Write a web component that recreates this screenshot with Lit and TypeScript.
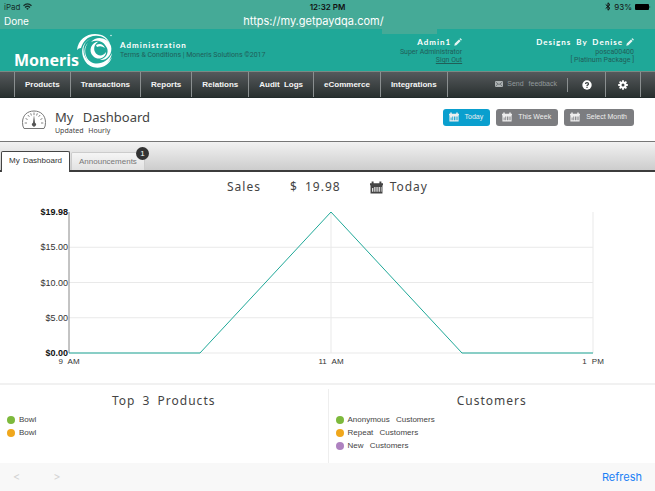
import { LitElement, html, css, svg } from "lit";
import { customElement, property } from "lit/decorators.js";

const calendar = html`<svg class="cal" viewBox="0 0 12 12" aria-hidden="true">
  <path fill="currentColor" fill-rule="evenodd" d="M0 2h1.500V.5h1.800V2h5.400V.5h1.800V2H12v2H0zM.5 4h11v7.500H.5zM2 6.500V10h1V6.500zm2-1V10h1V5.500zm2 0V10h1V5.500zm2 0V10h1V5.500zm2 0V10h.6V5.500z"/>
</svg>`;

const pencil = html`<svg class="pencil" viewBox="0 0 8 8" aria-hidden="true">
  <path fill="currentColor" d="M.3 7.700.8 5.600 5 1.400 6.600 3 2.400 7.200zM5.500.9 6 .4Q6.400 0 6.800.4L7.600 1.200Q8 1.600 7.600 2L7.100 2.500z"/>
</svg>`;

@customElement("sales-chart")
export class SalesChart extends LitElement {
  @property({ attribute: false }) values = [0, 0, 19.98, 0, 0];
  @property({ attribute: false }) hours = ["9 AM", "11 AM", "1 PM"];
  @property({ attribute: false }) ticks = ["$19.98", "$15.00", "$10.00", "$5.00", "$0.00"];

  static styles = css`
    :host {
      display: grid;
      grid-template-columns: 68px 1fr;
      column-gap: 1px;
      padding-right: 62px;
      font: 8px/8px "Liberation Sans", Arial, sans-serif;
      color: #333;
    }
    .y {
      display: flex;
      flex-direction: column;
      justify-content: space-between;
      margin: -4px 0;
      text-align: right;
      font-size: 9px;
    }
    .y span:first-child,
    .y span:last-child {
      font-weight: bold;
      color: #111;
    }
    .plot {
      display: block;
      width: 100%;
      height: 141px;
      overflow: visible;
    }
    .plot * {
      vector-effect: non-scaling-stroke;
      fill: none;
    }
    .grid { stroke: #e9e9e9; }
    .axis { stroke: #888; }
    .line { stroke: #1fa898; }
    .x {
      grid-column: 2;
      display: flex;
      justify-content: space-between;
      padding-top: 5px;
      word-spacing: 3px;
    }
    .x span {
      display: flex;
      justify-content: center;
      width: 0;
      white-space: nowrap;
    }
  `;

  render() {
    const max = Math.max(...this.values);
    const last = this.values.length - 1;
    const points = this.values
      .map((v, i) => `${(i / last) * 100},${100 - (v / max) * 100}`)
      .join(" ");
    return html`
      <div class="y">${this.ticks.map((t) => html`<span>${t}</span>`)}</div>
      <svg class="plot" viewBox="0 0 100 100" preserveAspectRatio="none" role="img" aria-label="Sales by hour">
        ${[25, 50, 75, 100].map((y) => svg`<path class="grid" d="M0 ${y}H100"/>`)}
        ${[50, 100].map((x) => svg`<path class="grid" d="M${x} 0V100"/>`)}
        <path class="axis" d="M0 0V100" />
        <polyline class="line" points=${points} />
      </svg>
      <div class="x">${this.hours.map((h) => html`<span>${h}</span>`)}</div>
    `;
  }
}

@customElement("app-root")
export class AppRoot extends LitElement {
  static styles = css`
    :host {
      display: flex;
      flex-direction: column;
      min-height: 100vh;
      box-sizing: border-box;
      background: #fff;
      color: #444;
      font: 8px/10px "Liberation Sans", Arial, sans-serif;
    }
    * { box-sizing: border-box; }
    button {
      font: inherit;
      color: inherit;
      background: none;
      border: 0;
      padding: 0;
    }
    a { color: inherit; text-decoration: none; }
    h1, h2, p, ul { margin: 0; padding: 0; list-style: none; }
    svg { display: block; flex: none; }

    .browser {
      background: #45aa97;
      font-family: Inter, sans-serif;
      padding: 0 4px;
    }
    .row {
      display: grid;
      grid-template-columns: 1fr auto 1fr;
      align-items: center;
    }
    .status { height: 13px; color: #16302b; }
    .status .left, .status .right { display: flex; align-items: center; gap: 3px; }
    .status .right { justify-content: flex-end; color: #111; }
    .status .time { font-weight: 600; color: #111; }
    .wifi { width: 9px; height: 7px; }
    .bt { width: 6px; height: 9px; }
    .battery { width: 16px; height: 6px; }
    .address { height: 16px; color: #fff; font-size: 11px; line-height: 16px; }
    .address button { justify-self: start; font-size: 10px; }
    .address .url { padding-right: 28px; }

    .brand {
      display: flex;
      align-items: flex-start;
      height: 42px;
      padding: 4px 21px 0 14px;
      background: #1fa898;
      color: #205e58;
      position: relative;
    }
    .brand::before {
      content: "";
      position: absolute;
      top: 0;
      right: 218px;
      width: 55px;
      height: 5px;
      background: #45aa97;
    }
    .logo { display: flex; color: #fff; }
    .logo b {
      font: bold 16px/20px "Noto Sans", sans-serif;
      margin-top: 17px;
    }
    .swirl { width: 36px; height: 36px; margin-left: -2px; }
    .title {
      flex: 1;
      margin: 7px 0 0 7px;
      font: 7px/10px Roboto, sans-serif;
      white-space: nowrap;
    }
    .title h2, .who strong {
      font: bold 8px/10px Lato, sans-serif;
      letter-spacing: 1px;
      word-spacing: 2px;
      color: #fff;
    }
    .who {
      display: flex;
      flex-direction: column;
      align-items: flex-end;
      margin-top: 4px;
      font: 7px/8px Roboto, sans-serif;
      white-space: nowrap;
    }
    .who + .who { margin-left: 74px; }
    .who .name { display: flex; gap: 3px; align-items: center; padding-bottom: 1px; }
    .who a { text-decoration: underline; }
    .pencil { width: 8px; height: 8px; color: #e4f5f2; }

    nav {
      display: flex;
      height: 27px;
      padding: 0 14px;
      border-top: 1px solid #7b8a84;
      border-bottom: 1px solid #222b2b;
      background: linear-gradient(#55595c, #29302f);
      color: #f5f5f5;
      font-weight: bold;
      line-height: 25px;
    }
    nav .item {
      padding: 0 10px;
      border-left: 1px solid #8a8f90;
      white-space: nowrap;
      word-spacing: 2px;
    }
    nav .item:nth-child(7) { border-right: 1px solid #8a8f90; }
    nav .feedback {
      display: flex;
      align-items: center;
      gap: 4px;
      margin-left: auto;
      padding-right: 10px;
      color: #92999b;
      font-size: 7px;
      font-weight: normal;
      line-height: 23px;
      height: 23px;
      word-spacing: 3px;
      white-space: nowrap;
    }
    .mail { width: 8px; height: 6px; }
    .rule { width: 1px; height: 14px; margin-top: 6px; background: #8a8f90; }
    nav .tool {
      display: grid;
      place-items: center;
      width: 35px;
      border-right: 1px solid #8a8f90;
    }
    nav .tool.help { width: 38px; }
    nav .tool svg { width: 10px; height: 10px; }

    .heading {
      display: flex;
      align-items: center;
      height: 43px;
      padding: 0 21px;
    }
    .gauge { width: 26px; height: 20px; }
    .names { flex: 1; margin-left: 8px; padding-top: 5px; }
    h1, .names p { font: 13px/17px "Noto Sans", sans-serif; word-spacing: 6px; }
    .names p { font-size: 7px; line-height: 10px; word-spacing: 3px; }
    .ranges { display: flex; gap: 6px; margin-bottom: 5px; }
    .ranges button {
      display: flex;
      align-items: center;
      gap: 6px;
      height: 17px;
      padding: 0 7px 0 6px;
      border-radius: 3px;
      background: #7c7d80;
      color: #eee;
      font-size: 7px;
    }
    .ranges button.on { background: #0a9fce; }
    .cal { width: 10px; height: 10px; }

    .tabs {
      display: flex;
      align-items: flex-end;
      gap: 1px;
      height: 31px;
      padding-left: 1px;
      border-top: 1px solid #777;
      background: linear-gradient(#f2f2f2, #cacaca);
      box-shadow: inset 0 -2px #3c3c3c;
    }
    .tabs button {
      height: 18px;
      margin-bottom: 2px;
      padding: 0 7px;
      border: 1px solid #ccc;
      border-bottom: 0;
      border-radius: 2px 2px 0 0;
      background: linear-gradient(#f5f5f5, #e2e2e2);
      color: #777;
      position: relative;
    }
    .tabs button.on {
      height: 21px;
      margin-bottom: 0;
      padding-bottom: 2px;
      border-color: #444;
      background: #fff;
      color: #333;
      word-spacing: 1px;
    }
    .badge {
      position: absolute;
      right: -5px;
      top: -6px;
      width: 13px;
      height: 13px;
      border-radius: 50%;
      background: #333;
      color: #fff;
      line-height: 13px;
    }

    .sales, .panel h2 {
      font: 12px/18px "Noto Sans", sans-serif;
      letter-spacing: 1px;
      word-spacing: 3px;
      color: #444;
    }
    .sales {
      display: flex;
      justify-content: center;
      align-items: center;
      gap: 29px;
      padding: 6px 0;
    }
    .sales span { display: flex; align-items: center; gap: 7px; }
    .sales .cal { width: 13px; height: 13px; }
    sales-chart { margin-top: 10px; }

    .panels {
      display: grid;
      grid-template-columns: 1fr 1fr;
      flex: 1;
      margin-top: 17px;
      padding-top: 4px;
      border-top: 2px solid #f1f1f1;
    }
    .panel { padding: 3px 7px 0; }
    .panel + .panel { border-left: 1px solid #eee; }
    .panel h2 { text-align: center; margin-bottom: 3px; }
    .panel li { display: flex; align-items: center; gap: 4px; height: 13px; word-spacing: 4px; }
    .dot { width: 8px; height: 8px; border-radius: 50%; }
    .green { background: #7db93c; }
    .orange { background: #f0a71c; }
    .purple { background: #ae82c0; }

    footer {
      display: flex;
      align-items: center;
      gap: 33px;
      height: 28px;
      padding: 0 13px;
      background: #f8f8f8;
      color: #d3d3d3;
      font: 11px/14px Inter, sans-serif;
    }
    footer .refresh { margin-left: auto; color: #1a80f5; }
  `;

  private menu = ["Products", "Transactions", "Reports", "Relations", "Audit Logs", "eCommerce", "Integrations"];

  private panel(title: string, rows: [string, string][]) {
    return html`<section class="panel">
      <h2>${title}</h2>
      <ul>${rows.map(([c, t]) => html`<li><i class="dot ${c}"></i>${t}</li>`)}</ul>
    </section>`;
  }

  render() {
    return html`
      <div class="browser">
        <div class="row status">
          <span class="left">iPad
            <svg class="wifi" viewBox="0 0 9 7" aria-hidden="true"><g fill="none" stroke="currentColor" stroke-width="1.300"><path d="M.5 2.700Q4.500-1 8.500 2.700M2 4.400Q4.500 2.200 7 4.400"/></g><path fill="currentColor" d="M3.200 5.400Q4.500 4.400 5.800 5.400L4.500 7z"/></svg>
          </span>
          <span class="time">12:32 PM</span>
          <span class="right">
            <svg class="bt" viewBox="0 0 6 9" aria-hidden="true"><path fill="none" stroke="currentColor" d="M.7 2.500 5 6.300 3 8.200V.8L5 2.700.7 6.500"/></svg>
            93%
            <svg class="battery" viewBox="0 0 16 6" aria-hidden="true"><rect width="14" height="6" rx="1"/><path d="M14.600 2Q16 3 14.600 4z"/></svg>
          </span>
        </div>
        <div class="row address">
          <button>Done</button>
          <span class="url">https://my.getpaydqa.com/</span>
        </div>
      </div>

      <header class="brand">
        <div class="logo">
          <b>Moneris</b>
          <svg class="swirl" viewBox="0 0 36 36" fill="#fff" aria-hidden="true">
            <path d="M0 17C1 7 9 1 18 1C26 1 31 5 33 11C30 6 25 2.500 19 2.800C10 3 6 9 4 15Q1.500 15 0 17z"/>
            <path d="M15 5.500C5 8 4 21 11 28C18 35 30 33 35 24C31 37 14 38 8 28C2 18 6 8 15 5.500z"/>
            <path d="M11 10C6 16 8 25 14 29C21 33 31 29 35 20C33 35 16 37 10 27C6 20 7 13 11 10z"/>
            <path d="M14 9C20 2 31 5 34 13C36 21 30 28 23 27C29 25 32 20 30 15C27 8 20 6 14 9z"/>
            <path d="M22 8.500C14 9 11 18 16 23C21 28 29 25 29 19C26 24 20 23 18 19C16 15 18 10 22 8.500z"/>
            <path d="M19 12Q25 9 28 15Q24 12 20 14z"/>
            <circle cx="34" cy="2.500" r=".7"/>
          </svg>
        </div>
        <div class="title">
          <h2>Administration</h2>
          <span>Terms &amp; Conditions | Moneris Solutions ©2017</span>
        </div>
        <div class="who">
          <span class="name"><strong>Admin1</strong>${pencil}</span>
          <span>Super Administrator</span>
          <a href="#">Sign Out</a>
        </div>
        <div class="who">
          <span class="name"><strong>Designs By Denise</strong>${pencil}</span>
          <span>posca00400</span>
          <span>[ Platinum Package ]</span>
        </div>
      </header>

      <nav>
        ${this.menu.map((m) => html`<a class="item" href="#">${m}</a>`)}
        <a class="feedback" href="#">
          <svg class="mail" viewBox="0 0 8 6" aria-hidden="true"><rect width="8" height="6" rx="1" fill="#aeb3b4"/><path d="M.8 1.200 4 3.600 7.200 1.200M.8 5 2.800 3.300M7.200 5 5.200 3.300" fill="none" stroke="#51585a" stroke-width=".7"/></svg>
          Send feedback
        </a>
        <i class="rule"></i>
        <button class="tool help" aria-label="Help">
          <svg viewBox="0 0 10 10"><circle cx="5" cy="5" r="4.700" fill="#fff"/><path d="M3.500 4Q3.500 2.600 5 2.600T6.500 3.900Q6.500 4.700 5.500 5.100 5 5.300 5 6.100M5 6.800V7.900" fill="none" stroke="#353b3c" stroke-width="1.200"/></svg>
        </button>
        <button class="tool" aria-label="Settings">
          <svg viewBox="0 0 10 10" fill="none" stroke="#fff"><circle cx="5" cy="5" r="2.500" stroke-width="2"/><path stroke-width="1.800" d="M5 .2V2M5 8V9.800M.2 5H2M8 5H9.800M1.600 1.600 2.900 2.900M7.100 7.100 8.400 8.400M8.400 1.600 7.100 2.900M2.900 7.100 1.600 8.400"/></svg>
        </button>
      </nav>

      <div class="heading">
        <svg class="gauge" viewBox="0 0 26 20" fill="none" stroke="#777" aria-hidden="true">
          <path d="M3 18.500Q1.500 16.500 1.500 12.500C1.500 5.500 6 1 13 1S24.500 5.500 24.500 12.500Q24.500 16.500 23 18.500z"/>
          <path stroke-width=".9" d="M3.700 13H6M20 13H22.300M4.600 8.500 6.600 9.500M21.400 8.500 19.400 9.500M6.800 5 8.400 6.800M19.200 5 17.600 6.800M9.700 3.300 10.400 5.500M16.300 3.300 15.600 5.500M13 2.500V5"/>
          <path fill="#555" stroke="none" d="M13 5 14 12.700A2 2 0 1 1 12 12.700z"/>
        </svg>
        <div class="names">
          <h1>My Dashboard</h1>
          <p>Updated Hourly</p>
        </div>
        <div class="ranges">
          <button class="on">${calendar}Today</button>
          <button>${calendar}This Week</button>
          <button>${calendar}Select Month</button>
        </div>
      </div>

      <div class="tabs" role="tablist">
        <button class="on" role="tab" aria-selected="true">My Dashboard</button>
        <button role="tab" aria-selected="false">Announcements<span class="badge">1</span></button>
      </div>

      <div class="sales">
        <span>Sales</span><span>$ 19.98</span><span>${calendar}Today</span>
      </div>
      <sales-chart></sales-chart>

      <div class="panels">
        ${this.panel("Top 3 Products", [["green", "Bowl"], ["orange", "Bowl"]])}
        ${this.panel("Customers", [["green", "Anonymous Customers"], ["orange", "Repeat Customers"], ["purple", "New Customers"]])}
      </div>

      <footer>
        <button aria-label="Back">&lt;</button>
        <button aria-label="Forward">&gt;</button>
        <button class="refresh">Refresh</button>
      </footer>
    `;
  }
}
